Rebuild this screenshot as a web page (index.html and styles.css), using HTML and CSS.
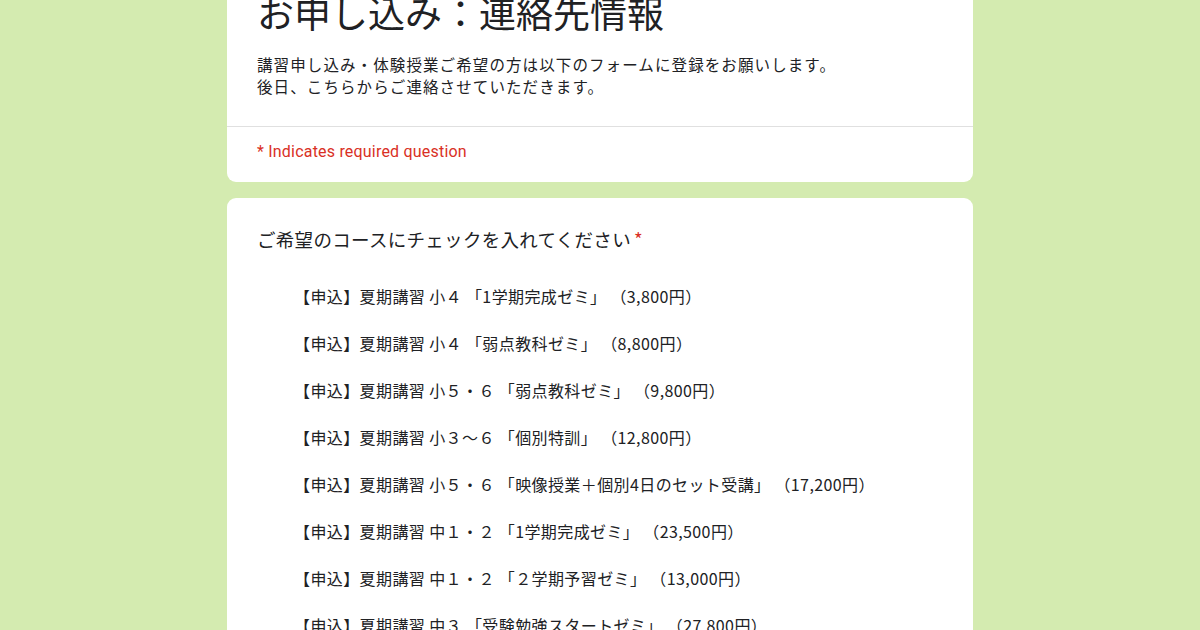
FILE: index.html
```html
<!DOCTYPE html>
<html lang="ja">
<head>
    <meta charset="UTF-8">
    <title>お申し込み：連絡先情報</title>
    <link rel="stylesheet" href="styles.css">
</head>
<body>

<div class="form-wrap">
    <div class="card header-card">
        <div class="header-top">
            <h1 class="form-title">お申し込み：連絡先情報</h1>
            <p class="form-desc">講習申し込み・体験授業ご希望の方は以下のフォームに登録をお願いします。<br>後日、こちらからご連絡させていただきます。</p>
        </div>
        <div class="header-bottom">
            <p class="required-note">* Indicates required question</p>
        </div>
    </div>

    <div class="card question-card">
        <h2 class="question-title">ご希望のコースにチェックを入れてください<span class="star">*</span></h2>
        <ul class="options">
            <li>【申込】夏期講習 小４ 「1学期完成ゼミ」 （3,800円）</li>
            <li>【申込】夏期講習 小４ 「弱点教科ゼミ」 （8,800円）</li>
            <li>【申込】夏期講習 小５・６ 「弱点教科ゼミ」 （9,800円）</li>
            <li>【申込】夏期講習 小３～６ 「個別特訓」 （12,800円）</li>
            <li>【申込】夏期講習 小５・６ 「映像授業＋個別4日のセット受講」 （17,200円）</li>
            <li>【申込】夏期講習 中１・２ 「1学期完成ゼミ」 （23,500円）</li>
            <li>【申込】夏期講習 中１・２ 「２学期予習ゼミ」 （13,000円）</li>
            <li>【申込】夏期講習 中３ 「受験勉強スタートゼミ」 （27,800円）</li>
        </ul>
    </div>
</div>

</body>
</html>
```

FILE: styles.css
```css
* {
    margin: 0;
    padding: 0;
    box-sizing: border-box;
}

body {
    font-family: 'Noto Sans CJK JP', sans-serif;
    background-color: #d4ebb0;
    color: #202124;
    height: 630px;
    overflow: hidden;
}

.form-wrap {
    width: 746px;
    margin: -32px auto 0;
    display: flex;
    flex-direction: column;
    gap: 16px;
}

.card {
    background-color: #fff;
    border-radius: 9px;
}

.header-top {
    padding: 22px 30px 29px;
    border-bottom: 1px solid #e0e0e0;
}

.form-title {
    font-size: 37px;
    font-weight: normal;
    line-height: 44px;
}

.form-desc {
    margin-top: 19px;
    font-size: 15.5px;
    letter-spacing: 1.1px;
    line-height: 22px;
}

.header-bottom {
    padding: 14px 30px 19px;
}

.required-note {
    font-family: 'Roboto', sans-serif;
    font-size: 16px;
    letter-spacing: 0.2px;
    line-height: 22px;
    color: #d93025;
}

.question-card {
    padding: 28px 30px 20px;
}

.question-title {
    font-size: 18.5px;
    font-weight: normal;
    letter-spacing: 0.3px;
    line-height: 26px;
}

.star {
    color: #d93025;
    margin-left: 3px;
}

.options {
    list-style: none;
    margin-top: 21px;
}

.options li {
    padding-left: 37px;
    font-size: 16px;
    letter-spacing: 0.4px;
    line-height: 47px;
}
```
